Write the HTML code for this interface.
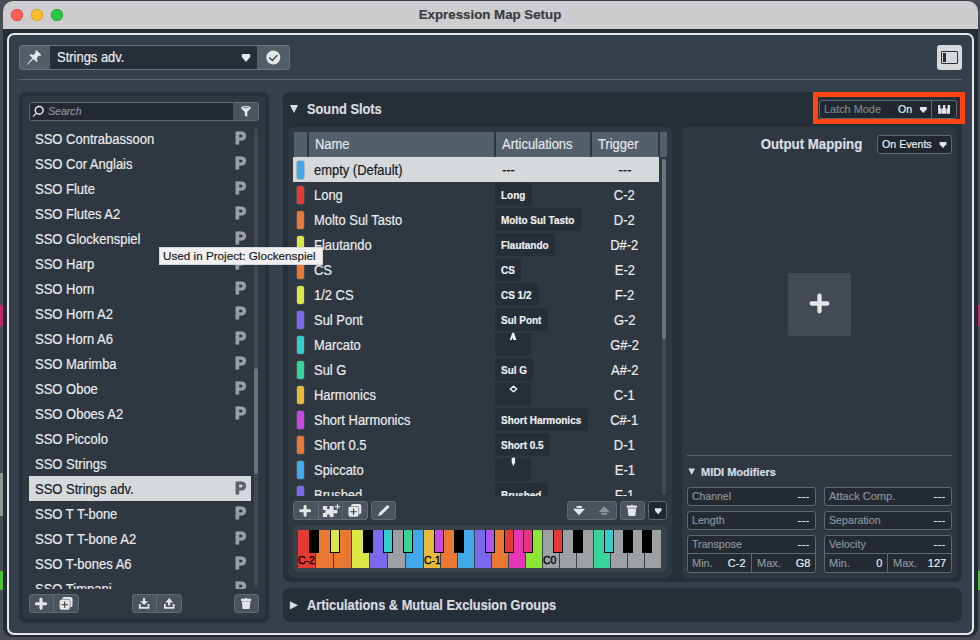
<!DOCTYPE html>
<html lang="en"><head><meta charset="utf-8"><title>Expression Map Setup</title>
<style>
*{box-sizing:border-box;margin:0;padding:0}
html,body{width:980px;height:640px;overflow:hidden}
body{background:#484d55;font-family:"Liberation Sans",sans-serif;color:#e4e7ea;-webkit-text-stroke:.2px;position:relative;font-size:14px;-webkit-font-smoothing:antialiased}
.abs{position:absolute}
.t{display:inline-block;transform:scaleX(var(--sx,.925));transform-origin:0 50%;white-space:nowrap}
.tr{transform-origin:100% 50%}
.tc{transform-origin:50% 50%}
.s12{--sx:.955}
.sb{--sx:.915}
#win{left:3px;top:1px;width:975px;height:636px;background:#252c34;border-radius:10px 10px 9px 9px;overflow:hidden}
#tbar{left:0;top:0;width:975px;height:28px;background:#cdcdcf}
#title{left:0;top:6px;width:980px;text-align:center;font-weight:bold;font-size:13.3px;color:#3c3c3e}
.tl{width:12px;height:12px;border-radius:50%;top:8px}
#frame{left:7px;top:33px;width:967px;height:602px;border:2px solid #e6e9ec;border-radius:7px;background:#343f4b}
.btn{background:#4b545d;border:1px solid #606a74}
.fld{background:#232a32;border:1px solid #5f6973}
.li{left:29px;width:222px;height:25px;font-size:14px;line-height:27px;padding-left:5.8px;overflow:hidden;color:#e9ebed;white-space:nowrap}
.li b{position:absolute;left:206px;top:0;font-size:16.5px;line-height:25px;color:#9a9fa5;font-weight:bold;-webkit-text-stroke:1.1px #9da2a7}
.li.sel{background:#d5d9dc;color:#16191c}
.li.sel b{color:#5a6068;-webkit-text-stroke:1.1px #5a6068}
.row{left:293px;width:366px;height:25px;font-size:14px;line-height:27px;color:#e9ebed;white-space:nowrap}
.row.sel{background:#d5d9dc;color:#16191c}
.chip{position:absolute;left:4.2px;top:4px;width:7.2px;height:17.5px;border-radius:2px;box-shadow:0 0 0 0.6px rgba(110,120,130,.6)}
.nm{position:absolute;left:20.7px;top:0}
.tag{position:absolute;left:202px;top:1px;height:23px;background:#262e37;border-radius:3px;font-size:11px;font-weight:bold;line-height:25px;padding-left:6px;color:#eef0f2}
.art{position:absolute;left:209px;top:0}
.trg{position:absolute;left:298px;top:0;width:67px;text-align:center}
.hd{top:132px;height:25px;background:#535f6b;font-size:14px;line-height:25px;color:#e4e7ea;padding-left:6px}
.mf{font-size:11.5px;color:#8b939b;line-height:17px;white-space:nowrap}
.mf i{font-style:normal;position:absolute;right:5px;top:0;color:#e9ebed}
</style></head><body>

<div class="abs" style="left:0;top:305px;width:3px;height:21px;background:#c02a66"></div>
<div class="abs" style="left:977px;top:305px;width:3px;height:21px;background:#c02a66"></div>
<div class="abs" style="left:0;top:571px;width:3px;height:19px;background:#4fc234"></div>
<div class="abs" style="left:977px;top:571px;width:3px;height:19px;background:#4fc234"></div>
<div class="abs" style="left:0;top:473px;width:3px;height:43px;background:#8f949a"></div>
<div class="abs" style="left:12px;top:0;width:958px;height:1px;background:#3b4149"></div>
<div id="win" class="abs">
<div id="tbar" class="abs"></div>
<div class="abs tl" style="left:8px;background:#fe5f57;box-shadow:inset 0 0 0 .8px #d9443c"></div>
<div class="abs tl" style="left:28px;background:#febc2e;box-shadow:inset 0 0 0 .8px #d9a022"></div>
<div class="abs tl" style="left:48px;background:#28c840;box-shadow:inset 0 0 0 .8px #1fa32f"></div>
<div id="title" class="abs" style="left:-3px">Expression Map Setup</div>
</div>
<div id="frame" class="abs"></div>
<div class="abs btn" style="left:19px;top:45px;width:271px;height:25px;border-radius:3px;background:#525d68;border-color:#697580"></div>
<div class="abs" style="left:50px;top:46px;width:207px;height:23px;background:#262e37;font-size:14px;line-height:23px;padding-left:7px;color:#e9ebed"><span class="t">Strings adv.</span></div>
<div class="abs" style="left:937px;top:45px;width:25px;height:25px;background:#d5d9dc;border-radius:3px"></div>
<div class="abs" style="left:941px;top:51px;width:17px;height:13px;border:1.3px solid #2a3038;border-radius:1px"></div>
<div class="abs" style="left:943.3px;top:53.3px;width:3px;height:8.4px;background:#2a3038"></div>
<div class="abs" style="left:19px;top:79px;width:943px;height:1px;background:#58636e"></div>
<div class="abs" style="left:19px;top:92px;width:250px;height:531px;background:#272f38;border-radius:7px"></div>
<div class="abs" style="left:23px;top:96px;width:242px;height:523px;background:#2f3740;border-radius:5px"></div>
<div class="abs btn" style="left:29px;top:102px;width:230px;height:19px;border-radius:3px"></div>
<div class="abs" style="left:30px;top:103px;width:203px;height:17px;background:#232a32;border-radius:2px 0 0 2px;font-size:11.5px;font-style:italic;line-height:17px;padding-left:18px;color:#8b939b"><span class="t s12" style="--sx:.92">Search</span></div>
<div class="abs" style="left:0;top:0;width:270px;height:589px;overflow:hidden">
<div class="li abs" style="top:126px"><span class="t" style="--sx:.928">SSO Contrabassoon</span><b>P</b></div>
<div class="li abs" style="top:151px"><span class="t" style="--sx:.928">SSO Cor Anglais</span><b>P</b></div>
<div class="li abs" style="top:176px"><span class="t" style="--sx:.928">SSO Flute</span><b>P</b></div>
<div class="li abs" style="top:201px"><span class="t" style="--sx:.928">SSO Flutes A2</span><b>P</b></div>
<div class="li abs" style="top:226px"><span class="t" style="--sx:.928">SSO Glockenspiel</span><b>P</b></div>
<div class="li abs" style="top:251px"><span class="t" style="--sx:.928">SSO Harp</span><b>P</b></div>
<div class="li abs" style="top:276px"><span class="t" style="--sx:.928">SSO Horn</span><b>P</b></div>
<div class="li abs" style="top:301px"><span class="t" style="--sx:.928">SSO Horn A2</span><b>P</b></div>
<div class="li abs" style="top:326px"><span class="t" style="--sx:.928">SSO Horn A6</span><b>P</b></div>
<div class="li abs" style="top:351px"><span class="t" style="--sx:.928">SSO Marimba</span><b>P</b></div>
<div class="li abs" style="top:376px"><span class="t" style="--sx:.928">SSO Oboe</span><b>P</b></div>
<div class="li abs" style="top:401px"><span class="t" style="--sx:.928">SSO Oboes A2</span><b>P</b></div>
<div class="li abs" style="top:426px"><span class="t" style="--sx:.928">SSO Piccolo</span></div>
<div class="li abs" style="top:451px"><span class="t" style="--sx:.928">SSO Strings</span></div>
<div class="li abs sel" style="top:476px"><span class="t" style="--sx:.928">SSO Strings adv.</span><b>P</b></div>
<div class="li abs" style="top:501px"><span class="t" style="--sx:.928">SSO T T-bone</span><b>P</b></div>
<div class="li abs" style="top:526px"><span class="t" style="--sx:.928">SSO T T-bone A2</span><b>P</b></div>
<div class="li abs" style="top:551px"><span class="t" style="--sx:.928">SSO T-bones A6</span><b>P</b></div>
<div class="li abs" style="top:576px"><span class="t" style="--sx:.928">SSO Timpani</span><b>P</b></div>
</div>
<div class="abs" style="left:254px;top:128px;width:4px;height:460px;background:#414850;border-radius:2px"></div>
<div class="abs" style="left:254px;top:368px;width:4px;height:106px;background:#6d737b;border-radius:2px"></div>
<div class="abs btn" style="left:29px;top:594px;width:50px;height:19px;border-radius:3px"></div>
<div class="abs" style="left:53px;top:594px;width:1px;height:19px;background:#606a74"></div>
<div class="abs btn" style="left:132px;top:594px;width:50px;height:19px;border-radius:3px"></div>
<div class="abs" style="left:156px;top:594px;width:1px;height:19px;background:#606a74"></div>
<div class="abs btn" style="left:234px;top:594px;width:25px;height:19px;border-radius:3px"></div>
<div class="abs" style="left:283px;top:92px;width:679px;height:490px;background:#262e37;border-radius:7px"></div>
<div class="abs" style="left:307px;top:100px;font-size:14px;font-weight:bold;line-height:18px;color:#d9dde0"><span class="t sb">Sound Slots</span></div>
<div class="abs" style="left:812.5px;top:92.4px;width:152.3px;height:32.1px;border:5.2px solid #ff4612;background:#262e37"></div>
<div class="abs fld" style="left:819px;top:100px;width:138px;height:19px;border-radius:3px;background:#20272f"></div>
<div class="abs" style="left:931px;top:100px;width:1px;height:19px;background:#606a74"></div>
<div class="abs" style="left:824px;top:101px;font-size:11.5px;line-height:17px;color:#7e868e"><span class="t s12" style="--sx:.948">Latch Mode</span></div>
<div class="abs" style="left:898px;top:101px;font-size:11.5px;line-height:17px;color:#e9ebed"><span class="t s12" style="--sx:.92">On</span></div>
<div class="abs" style="left:288px;top:127px;width:384px;height:451px;background:#2f3740;border-radius:6px"></div>
<div class="abs hd" style="left:294px;width:13px;padding:0"></div>
<div class="abs hd" style="left:309px;width:185px"><span class="t">Name</span></div>
<div class="abs hd" style="left:496px;width:94px"><span class="t">Articulations</span></div>
<div class="abs hd" style="left:592px;width:66px"><span class="t">Trigger</span></div>
<div class="abs hd" style="left:660px;width:7px;padding:0"></div>
<div class="abs" style="left:0;top:157px;width:680px;height:339px;overflow:hidden">
<div class="row abs sel" style="top:0px"><span class="chip" style="background:#41a8ea"></span><span class="nm t">empty (Default)</span><span class="art t">---</span><span class="trg"><span class="t tc">---</span></span></div>
<div class="row abs" style="top:25px"><span class="chip" style="background:#e53a34"></span><span class="nm t">Long</span><span class="tag" style="width:37px"><span class="t" style="--sx:.905">Long</span></span><span class="trg"><span class="t tc">C-2</span></span></div>
<div class="row abs" style="top:50px"><span class="chip" style="background:#e87832"></span><span class="nm t">Molto Sul Tasto</span><span class="tag" style="width:86px"><span class="t" style="--sx:.905">Molto Sul Tasto</span></span><span class="trg"><span class="t tc">D-2</span></span></div>
<div class="row abs" style="top:75px"><span class="chip" style="background:#d9e845"></span><span class="nm t">Flautando</span><span class="tag" style="width:60px"><span class="t" style="--sx:.905">Flautando</span></span><span class="trg"><span class="t tc">D#-2</span></span></div>
<div class="row abs" style="top:100px"><span class="chip" style="background:#e87832"></span><span class="nm t">CS</span><span class="tag" style="width:26px"><span class="t" style="--sx:.905">CS</span></span><span class="trg"><span class="t tc">E-2</span></span></div>
<div class="row abs" style="top:125px"><span class="chip" style="background:#d9e845"></span><span class="nm t">1/2 CS</span><span class="tag" style="width:44px"><span class="t" style="--sx:.905">CS 1/2</span></span><span class="trg"><span class="t tc">F-2</span></span></div>
<div class="row abs" style="top:150px"><span class="chip" style="background:#7a69ee"></span><span class="nm t">Sul Pont</span><span class="tag" style="width:53px"><span class="t" style="--sx:.905">Sul Pont</span></span><span class="trg"><span class="t tc">G-2</span></span></div>
<div class="row abs" style="top:175px"><span class="chip" style="background:#33cdcd"></span><span class="nm t">Marcato</span><span class="tag" style="width:36px"></span><span class="trg"><span class="t tc">G#-2</span></span></div>
<div class="row abs" style="top:200px"><span class="chip" style="background:#35d59a"></span><span class="nm t">Sul G</span><span class="tag" style="width:38px"><span class="t" style="--sx:.905">Sul G</span></span><span class="trg"><span class="t tc">A#-2</span></span></div>
<div class="row abs" style="top:225px"><span class="chip" style="background:#e9b93a"></span><span class="nm t">Harmonics</span><span class="tag" style="width:36px"></span><span class="trg"><span class="t tc">C-1</span></span></div>
<div class="row abs" style="top:250px"><span class="chip" style="background:#cd45e2"></span><span class="nm t">Short Harmonics</span><span class="tag" style="width:93px"><span class="t" style="--sx:.905">Short Harmonics</span></span><span class="trg"><span class="t tc">C#-1</span></span></div>
<div class="row abs" style="top:275px"><span class="chip" style="background:#e87832"></span><span class="nm t">Short 0.5</span><span class="tag" style="width:55px"><span class="t" style="--sx:.905">Short 0.5</span></span><span class="trg"><span class="t tc">D-1</span></span></div>
<div class="row abs" style="top:300px"><span class="chip" style="background:#41a8ea"></span><span class="nm t">Spiccato</span><span class="tag" style="width:36px"></span><span class="trg"><span class="t tc">E-1</span></span></div>
<div class="row abs" style="top:325px"><span class="chip" style="background:#7a69ee"></span><span class="nm t">Brushed</span><span class="tag" style="width:53px"><span class="t" style="--sx:.905">Brushed</span></span><span class="trg"><span class="t tc">F-1</span></span></div>
</div>
<div class="abs" style="left:662px;top:159px;width:4px;height:336px;background:#414850;border-radius:2px"></div>
<div class="abs" style="left:662px;top:159px;width:4px;height:180px;background:#6d737b;border-radius:2px"></div>
<div class="abs btn" style="left:293px;top:501px;width:75px;height:19px;border-radius:3px"></div>
<div class="abs" style="left:318px;top:501px;width:1px;height:19px;background:#606a74"></div>
<div class="abs" style="left:342px;top:501px;width:1px;height:19px;background:#606a74"></div>
<div class="abs btn" style="left:371px;top:501px;width:25px;height:19px;border-radius:3px"></div>
<div class="abs btn" style="left:567px;top:501px;width:50px;height:19px;border-radius:3px"></div>
<div class="abs btn" style="left:620px;top:501px;width:25px;height:19px;border-radius:3px"></div>
<div class="abs fld" style="left:648px;top:501px;width:19px;height:19px;border-radius:3px;background:#20272f"></div>
<div class="abs" style="left:293px;top:525px;width:374px;height:47px;background:#394149;border-radius:5px"></div>
<div class="abs" style="left:298px;top:530px;width:17px;height:38px;background:#e53a34"></div>
<div class="abs" style="left:316px;top:530px;width:17px;height:38px;background:#e87832"></div>
<div class="abs" style="left:334px;top:530px;width:17px;height:38px;background:#e87832"></div>
<div class="abs" style="left:352px;top:530px;width:17px;height:38px;background:#d9e845"></div>
<div class="abs" style="left:370px;top:530px;width:17px;height:38px;background:#7a69ee"></div>
<div class="abs" style="left:388px;top:530px;width:17px;height:38px;background:#9da1a4"></div>
<div class="abs" style="left:406px;top:530px;width:17px;height:38px;background:#41a8ea"></div>
<div class="abs" style="left:424px;top:530px;width:16px;height:38px;background:#e9b93a"></div>
<div class="abs" style="left:441px;top:530px;width:16px;height:38px;background:#e87832"></div>
<div class="abs" style="left:458px;top:530px;width:16px;height:38px;background:#41a8ea"></div>
<div class="abs" style="left:475px;top:530px;width:16px;height:38px;background:#7a69ee"></div>
<div class="abs" style="left:492px;top:530px;width:16px;height:38px;background:#e87832"></div>
<div class="abs" style="left:509px;top:530px;width:16px;height:38px;background:#e636b8"></div>
<div class="abs" style="left:526px;top:530px;width:16px;height:38px;background:#8ce635"></div>
<div class="abs" style="left:543px;top:530px;width:16px;height:38px;background:#9da1a4"></div>
<div class="abs" style="left:560px;top:530px;width:16px;height:38px;background:#9da1a4"></div>
<div class="abs" style="left:577px;top:530px;width:16px;height:38px;background:#9da1a4"></div>
<div class="abs" style="left:594px;top:530px;width:16px;height:38px;background:#35d59a"></div>
<div class="abs" style="left:611px;top:530px;width:16px;height:38px;background:#9da1a4"></div>
<div class="abs" style="left:628px;top:530px;width:16px;height:38px;background:#9da1a4"></div>
<div class="abs" style="left:645px;top:530px;width:16px;height:38px;background:#9da1a4"></div>
<div class="abs" style="left:309px;top:530px;width:10px;height:23px;background:#000"></div>
<div class="abs" style="left:330px;top:530px;width:10px;height:23px;background:#d9e845;border:1px solid #000;border-top:0"></div>
<div class="abs" style="left:363px;top:530px;width:10px;height:23px;background:#000"></div>
<div class="abs" style="left:383.4px;top:530px;width:9.2px;height:23px;background:#33cdcd;border:1px solid #000;border-top:0"></div>
<div class="abs" style="left:403.4px;top:530px;width:9.4px;height:23px;background:#35d59a;border:1px solid #000;border-top:0"></div>
<div class="abs" style="left:434.4px;top:530px;width:9.3px;height:23px;background:#cd45e2;border:1px solid #000;border-top:0"></div>
<div class="abs" style="left:454px;top:530px;width:10px;height:23px;background:#000"></div>
<div class="abs" style="left:485.3px;top:530px;width:9.6px;height:23px;background:#a857ea;border:1px solid #000;border-top:0"></div>
<div class="abs" style="left:504.1px;top:530px;width:9.5px;height:23px;background:#e53a34;border:1px solid #000;border-top:0"></div>
<div class="abs" style="left:523.4px;top:530px;width:9.4px;height:23px;background:#e6357d;border:1px solid #000;border-top:0"></div>
<div class="abs" style="left:553.3px;top:530px;width:9.6px;height:23px;background:#e53a34;border:1px solid #000;border-top:0"></div>
<div class="abs" style="left:573px;top:530px;width:10px;height:23px;background:#000"></div>
<div class="abs" style="left:604.1px;top:530px;width:9.5px;height:23px;background:#33cdcd;border:1px solid #000;border-top:0"></div>
<div class="abs" style="left:623px;top:530px;width:10px;height:23px;background:#000"></div>
<div class="abs" style="left:642px;top:530px;width:10px;height:23px;background:#000"></div>
<div class="abs" style="left:298px;top:553px;font-size:10.5px;line-height:14px;color:#000;-webkit-text-stroke:.35px #000">C-2</div>
<div class="abs" style="left:424px;top:553px;font-size:10.5px;line-height:14px;color:#000;-webkit-text-stroke:.35px #000">C-1</div>
<div class="abs" style="left:543px;top:553px;font-size:10.5px;line-height:14px;color:#000;-webkit-text-stroke:.35px #000">C0</div>
<div class="abs" style="left:682px;top:127px;width:275px;height:451px;background:#2f3740;border-radius:6px"></div>
<div class="abs" style="left:700px;top:135px;width:162px;text-align:right;font-size:14px;font-weight:bold;line-height:18px;color:#d9dde0"><span class="t tr sb" style="--sx:.947">Output Mapping</span></div>
<div class="abs fld" style="left:877px;top:135px;width:75px;height:19px;border-radius:3px;background:#20272f;font-size:11.5px;line-height:17px;padding-left:4px;color:#e9ebed"><span class="t s12" style="--sx:.925">On Events</span></div>
<div class="abs" style="left:788px;top:273px;width:63px;height:63px;background:#444b54;border-radius:3px"></div>
<div class="abs" style="left:687px;top:455px;width:265px;height:1px;background:#58636e"></div>
<div class="abs" style="left:701px;top:464px;font-size:11.5px;font-weight:bold;line-height:16px;color:#d9dde0"><span class="t sb" style="--sx:.954">MIDI Modifiers</span></div>
<div class="abs fld mf" style="left:687px;top:487px;width:129px;height:19px;border-radius:3px;padding-left:4px"><span class="t" style="--sx:0.91">Channel</span><i class="t tr s12" style="letter-spacing:.5px;right:5.2px">---</i></div>
<div class="abs fld mf" style="left:824px;top:487px;width:128px;height:19px;border-radius:3px;padding-left:4px"><span class="t" style="--sx:0.96">Attack Comp.</span><i class="t tr s12" style="letter-spacing:.5px;right:5.2px">---</i></div>
<div class="abs fld mf" style="left:687px;top:511px;width:129px;height:19px;border-radius:3px;padding-left:4px"><span class="t" style="--sx:0.927">Length</span><i class="t tr s12" style="letter-spacing:.5px;right:5.2px">---</i></div>
<div class="abs fld mf" style="left:824px;top:511px;width:128px;height:19px;border-radius:3px;padding-left:4px"><span class="t" style="--sx:0.927">Separation</span><i class="t tr s12" style="letter-spacing:.5px;right:5.2px">---</i></div>
<div class="abs fld mf" style="left:687px;top:535px;width:129px;height:38px;border-radius:3px;padding-left:4px"><span class="t" style="--sx:0.927">Transpose</span><i class="t tr s12" style="letter-spacing:.5px;right:5.2px">---</i></div>
<div class="abs fld mf" style="left:824px;top:535px;width:128px;height:38px;border-radius:3px;padding-left:4px"><span class="t" style="--sx:0.927">Velocity</span><i class="t tr s12" style="letter-spacing:.5px;right:5.2px">---</i></div>
<div class="abs" style="left:687px;top:553px;width:129px;height:1px;background:#5f6973"></div>
<div class="abs" style="left:751px;top:553px;width:1px;height:19px;background:#5f6973"></div>
<div class="abs mf" style="left:692px;top:555px;width:55px"><span class="t s12">Min.</span><i class="t tr s12" style="right:1px">C-2</i></div>
<div class="abs mf" style="left:757px;top:555px;width:54px"><span class="t s12">Max.</span><i class="t tr s12" style="right:1px">G8</i></div>
<div class="abs" style="left:824px;top:553px;width:128px;height:1px;background:#5f6973"></div>
<div class="abs" style="left:887px;top:553px;width:1px;height:19px;background:#5f6973"></div>
<div class="abs mf" style="left:829px;top:555px;width:54px"><span class="t s12">Min.</span><i class="t tr s12" style="right:1px">0</i></div>
<div class="abs mf" style="left:893px;top:555px;width:54px"><span class="t s12">Max.</span><i class="t tr s12" style="right:1px">127</i></div>
<div class="abs" style="left:283px;top:588px;width:679px;height:34px;background:#262e37;border-radius:7px"></div>
<div class="abs" style="left:307px;top:596px;font-size:14px;font-weight:bold;line-height:18px;color:#d9dde0"><span class="t sb">Articulations &amp; Mutual Exclusion Groups</span></div>
<svg class="abs" style="left:0;top:0" width="980" height="640" viewBox="0 0 980 640"><path d="M36.400 50.100L41.300 55.100 40.100 56.100 38.700 55.700 36.700 57.900 37.700 61.100 36.600 62.100 33.400 59.100 27.100 64.900 26.800 64.400 32.300 58 29.500 55.200 30.400 54.100 33.500 55 35.600 52.700 35.300 51.300z" fill="#e4e6e8"/><path d="M241.8 54.1h8.4v3.00L246.00 62.0L241.8 57.10z" fill="#e4e6e8"/><circle cx="273.300" cy="57.500" r="7" fill="#e4e6e8"/><path d="M269.600 57.900l2.800 2.600 4.600-4.900" fill="none" stroke="#3d4650" stroke-width="1.400" stroke-linecap="round" stroke-linejoin="round"/><circle cx="39.200" cy="110.300" r="3.900" fill="none" stroke="#e4e6e8" stroke-width="1.500"/><path d="M36.400 113.200L33 116.600" stroke="#e4e6e8" stroke-width="1.200"/><path d="M241.100 107.800a4.900 1.800 0 0 1 9.800 0c0 .6-.4 1-.9 1.400L247.300 111.700V116.900L244.800 115.600V111.700L242 109.200c-.5-.4-.9-.8-.9-1.400z" fill="#e4e6e8"/><ellipse cx="246" cy="107.600" rx="3.300" ry=".8" fill="#8d949b"/><path d="M41 599.1v9.2M36.4 603.7h9.2" stroke="#e4e6e8" stroke-width="3.1" stroke-linecap="round" fill="none"/><rect x="62.2" y="596.9" width="10.3" height="10.3" rx="2" fill="#e4e6e8"/><rect x="59.1" y="599.1" width="11.2" height="11.2" rx="2.4" fill="#4b545d"/><rect x="59.6" y="599.6" width="10.2" height="10.2" rx="2" fill="#e4e6e8"/><path d="M64.7 601.4v6.600M61.4 604.7h6.600" stroke="#3a424b" stroke-width="1.1" fill="none"/><path d="M143 598h2.100v3.300h3L144.100 605.100 140.200 601.300h2.800z" fill="#e4e6e8"/><path d="M139.800 604.100v3.700h8.700v-3.700" fill="none" stroke="#e4e6e8" stroke-width="1.800"/><path d="M169.200 597.900L173.200 602.500h-3v2.900h-2.100v-2.900h-2.700z" fill="#e4e6e8"/><path d="M164.900 604.100v3.700h8.700v-3.700" fill="none" stroke="#e4e6e8" stroke-width="1.800"/><path d="M245.0 598.0h2.200v.9h-2.200z" fill="#e4e6e8"/><rect x="240.9" y="598.8" width="10.4" height="2.1" rx=".6" fill="#e4e6e8"/><path d="M241.8 600.9h8.600v.7h-8.600z" fill="#b9bdc1"/><path d="M241.8 601.6h8.600l-.8 6.900c0 .4-.3.600-.7.600h-5.600c-.4 0-.7-.2-.7-.600z" fill="#e4e6e8"/><path d="M289.900 105h8.200L294 112.900z" fill="#d9dde0"/><path d="M289.800 601.200L298.100 605.300 289.800 609.500z" fill="#d9dde0"/><path d="M688.400 468.600h6.600L691.700 475z" fill="#d9dde0"/><path d="M919.9 106.9h6.8v2.36L923.30 113.10000000000001L919.9 109.26z" fill="#e4e6e8"/><path d="M938.100 105h2.200v3.600h1.200v5.200h-3.400zM943 105h2.300v3.600h.8v5.200h-4.300v-5.200h1.200zM947.700 105h2.300v8.800h-3.500v-5.200h1.200z" fill="#e4e6e8"/><path d="M305.1 506.3v9.0M300.6 510.8h9.0" stroke="#e4e6e8" stroke-width="3.0" stroke-linecap="round" fill="none"/><rect x="322.900" y="505.900" width="10.700" height="11.200" rx=".7" fill="#e4e6e8"/><rect x="333" y="510.500" width="2.500" height="2.500" fill="#e4e6e8"/><circle cx="335.700" cy="511.700" r="1.900" fill="#e4e6e8"/><circle cx="324" cy="511.400" r="1.600" fill="#4b545d"/><rect x="322.500" y="510.900" width="1.500" height="1" fill="#4b545d"/><circle cx="328.400" cy="507.400" r="1.500" fill="#4b545d"/><rect x="327.900" y="505.500" width="1" height="1.500" fill="#4b545d"/><circle cx="328.400" cy="515.700" r="1.500" fill="#4b545d"/><rect x="327.900" y="516.200" width="1" height="1.200" fill="#4b545d"/><path d="M337.500 504.200v5M335 506.700h5" stroke="#e4e6e8" stroke-width="1.300" fill="none"/><rect x="351.0" y="503.9" width="10.3" height="10.3" rx="2" fill="#e4e6e8"/><rect x="347.9" y="506.1" width="11.2" height="11.2" rx="2.4" fill="#4b545d"/><rect x="348.4" y="506.6" width="10.2" height="10.2" rx="2" fill="#e4e6e8"/><path d="M353.5 508.4v6.600M350.2 511.7h6.600" stroke="#3a424b" stroke-width="1.1" fill="none"/><path d="M386.900 505.600Q387.800 504.800 388.700 505.700Q389.700 506.700 388.900 507.700L381.400 514.900 378.100 515.900 379.300 512.700z" fill="#e4e6e8"/><rect x="576.500" y="506" width="5.500" height="1.900" fill="#e4e6e8"/><path d="M572.900 508.700h12.200L579 515.300z" fill="#e4e6e8"/><rect x="601.600" y="513.100" width="5.400" height="1.800" fill="#8d939a"/><path d="M598.500 512.200h11.600L604.300 506.200z" fill="#8d939a"/><path d="M630.8 504.8h2.200v.9h-2.200z" fill="#e4e6e8"/><rect x="626.7" y="505.6" width="10.4" height="2.1" rx=".6" fill="#e4e6e8"/><path d="M627.6 507.7h8.600v.7h-8.600z" fill="#b9bdc1"/><path d="M627.6 508.4h8.600l-.8 6.900c0 .4-.3.600-.7.600h-5.600c-.4 0-.7-.2-.7-.600z" fill="#e4e6e8"/><path d="M654.9 508.2h6.6v2.32L658.20 514.3L654.9 510.52z" fill="#e4e6e8"/><path d="M939.6 141.9h6.8v2.36L943.00 148.1L939.6 144.26z" fill="#e4e6e8"/><path d="M819.500 295.700v15.600M811.700 303.500h15.600" stroke="#e4e6e8" stroke-width="4.300" stroke-linecap="round" fill="none"/><path d="M509.700 340L512.300 332.800h1.700L516.500 340h-3.100l-.8-2.500-.9 2.500z" fill="#f0f2f4"/><path d="M513.500 386.300L516.700 389 513.500 391.700 510.300 389z" fill="none" stroke="#f0f2f4" stroke-width="1.500" stroke-linejoin="round"/><path d="M511.700 457.800h3.400v4.400L513.400 466.200 511.700 462.200z" fill="#f0f2f4"/></svg>
<div class="abs" style="left:159px;top:247px;width:164px;height:18px;background:#f0f0f0;border:1px solid #d8d8d8;font-size:11.7px;line-height:16px;color:#1c1c1c;padding-left:3px;white-space:nowrap">Used in Project: Glockenspiel</div>
</body></html>
